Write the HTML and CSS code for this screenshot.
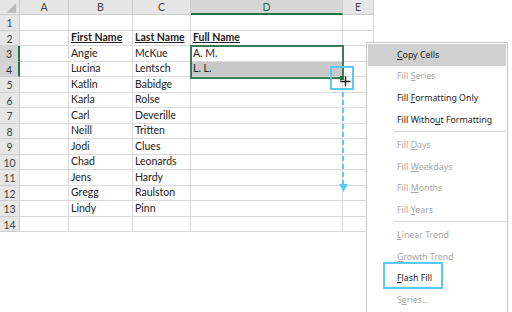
FILE: index.html
```html
<!DOCTYPE html>
<html>
<head>
<meta charset="utf-8">
<link rel="stylesheet" href="styles.css">
</head>
<body>
<div class="sheet">
  <div class="h corner"><svg width="20" height="15" viewBox="0 0 20 15"><polygon points="17,3 17,13 7,13" fill="#b8b8b8"/></svg></div>
  <div class="h col">A</div><div class="h col">B</div><div class="h col">C</div><div class="h col csel">D</div><div class="h col">E</div>

  <div class="h row">1</div><div class="c"></div><div class="c"></div><div class="c"></div><div class="c"></div><div class="c"></div>
  <div class="h row">2</div><div class="c"></div><div class="c b"><span>First Name</span></div><div class="c b"><span>Last Name</span></div><div class="c b"><span>Full Name</span></div><div class="c"></div>
  <div class="h row rsel">3</div><div class="c"></div><div class="c">Angie</div><div class="c">McKue</div><div class="c">A. M.</div><div class="c"></div>
  <div class="h row rsel">4</div><div class="c"></div><div class="c">Lucina</div><div class="c">Lentsch</div><div class="c gray">L. L.</div><div class="c"></div>
  <div class="h row">5</div><div class="c"></div><div class="c">Katlin</div><div class="c">Babidge</div><div class="c"></div><div class="c"></div>
  <div class="h row">6</div><div class="c"></div><div class="c">Karla</div><div class="c">Rolse</div><div class="c"></div><div class="c"></div>
  <div class="h row">7</div><div class="c"></div><div class="c">Carl</div><div class="c">Deverille</div><div class="c"></div><div class="c"></div>
  <div class="h row">8</div><div class="c"></div><div class="c">Neill</div><div class="c">Tritten</div><div class="c"></div><div class="c"></div>
  <div class="h row">9</div><div class="c"></div><div class="c">Jodi</div><div class="c">Clues</div><div class="c"></div><div class="c"></div>
  <div class="h row">10</div><div class="c"></div><div class="c">Chad</div><div class="c">Leonards</div><div class="c"></div><div class="c"></div>
  <div class="h row">11</div><div class="c"></div><div class="c">Jens</div><div class="c">Hardy</div><div class="c"></div><div class="c"></div>
  <div class="h row">12</div><div class="c"></div><div class="c">Gregg</div><div class="c">Raulston</div><div class="c"></div><div class="c"></div>
  <div class="h row">13</div><div class="c"></div><div class="c">Lindy</div><div class="c">Pinn</div><div class="c"></div><div class="c"></div>
  <div class="h row">14</div><div class="c"></div><div class="c"></div><div class="c"></div><div class="c"></div><div class="c"></div>
</div>

<div class="selection"></div>
<div class="handle"></div>
<div class="hbox"></div>
<svg class="cursor" width="13" height="13" viewBox="0 0 13 13">
  <path d="M6.5 1.5v10M1.5 6.5h10" stroke="#fff" stroke-width="3.2"/>
  <path d="M6.5 1.5v10M1.5 6.5h10" stroke="#111" stroke-width="1.3"/>
</svg>
<div class="dash"></div>
<svg class="arrow" width="9" height="9" viewBox="0 0 9 9"><polygon points="0,1 9,1 4.5,9" fill="#5cc8f5"/></svg>

<div class="menu">
  <div class="item on"><span><u>C</u>opy Cells</span></div>
  <div class="item dis"><span>Fill <u>S</u>eries</span></div>
  <div class="item"><span>Fill <u>F</u>ormatting Only</span></div>
  <div class="item"><span>Fill Witho<u>u</u>t Formatting</span></div>
  <div class="sep"></div>
  <div class="item dis"><span>Fill <u>D</u>ays</span></div>
  <div class="item dis"><span>Fill <u>W</u>eekdays</span></div>
  <div class="item dis"><span>Fill <u>M</u>onths</span></div>
  <div class="item dis"><span>Fill <u>Y</u>ears</span></div>
  <div class="sep"></div>
  <div class="item dis"><span><u>L</u>inear Trend</span></div>
  <div class="item dis"><span><u>G</u>rowth Trend</span></div>
  <div class="item"><span><u>F</u>lash Fill</span></div>
  <div class="item dis"><span>S<u>e</u>ries...</span></div>
</div>
<div class="fbox"></div>
</body>
</html>
```
FILE: styles.css
```css
html, body {
  margin: 0;
  padding: 0;
  background: #fff;
}
body {
  width: 512px;
  height: 312px;
  overflow: hidden;
  position: relative;
  font-family: Lato, "Open Sans", sans-serif;
}
.sheet {
  display: grid;
  grid-template-columns: 20px 49px 64px 58px 152px 31px;
  grid-template-rows: 15px repeat(7, 16px 15px);
  width: 374px;
}
.h {
  background: #e6e6e6;
  box-sizing: border-box;
  border-right: 1px solid #cdcdcd;
  border-bottom: 1px solid #cdcdcd;
  color: #444;
  font-size: 10.5px;
  display: flex;
  align-items: center;
  justify-content: center;
  line-height: 1;
}
.corner {
  padding: 0;
  align-items: stretch;
  justify-content: stretch;
}
.col {
  padding-top: 1px;
}
.csel {
  background: #d6d6d6;
  color: #217346;
  border-bottom: 2px solid #217346;
  padding-top: 2px;
}
.row {
  padding-top: 2px;
  justify-content: center;
}
.rsel {
  background: #d4d4d4;
  border-right: 2px solid #217346;
  color: #333;
}
.c {
  box-sizing: border-box;
  border-right: 1px solid #dadada;
  border-bottom: 1px solid #dadada;
  font-size: 10.5px;
  color: #222;
  padding: 0 2px 1px;
  display: flex;
  align-items: flex-end;
  white-space: nowrap;
  line-height: 13px;
}
.b span {
  font-weight: bold;
  text-decoration: underline;
  text-underline-offset: 1px;
}
.gray {
  background: #c8c8c8;
}
.selection {
  position: absolute;
  left: 190px;
  top: 45px;
  width: 154px;
  height: 34px;
  box-sizing: border-box;
  border: 2px solid #3f7a54;
}
.handle {
  position: absolute;
  left: 340px;
  top: 76px;
  width: 5px;
  height: 6px;
  background: #217346;
}
.hbox {
  position: absolute;
  left: 330px;
  top: 66px;
  width: 24px;
  height: 24px;
  box-sizing: border-box;
  border: 2px solid #5cc8f5;
}
.cursor {
  position: absolute;
  left: 339px;
  top: 75px;
}
.dash {
  position: absolute;
  left: 342px;
  top: 92px;
  width: 2px;
  height: 92px;
  background: repeating-linear-gradient(to bottom, #5cc8f5 0 5px, transparent 5px 8px);
}
.arrow {
  position: absolute;
  left: 338.5px;
  top: 183px;
}
.menu {
  position: absolute;
  left: 366px;
  top: 42px;
  width: 142px;
  box-sizing: border-box;
  border: 1px solid #c6c6c6;
  background: #fff;
  padding: 1px 1px 1px;
  display: flex;
  flex-direction: column;
  font-family: "Noto Sans", "Open Sans", sans-serif;
  font-size: 8.8px;
  color: #222;
}
.item {
  height: 21.66px;
  display: flex;
  align-items: center;
  padding-left: 29px;
  white-space: nowrap;
}
.item.on {
  background: #d0d0d0;
}
.item.dis {
  color: #a8a8a8;
}
.item u {
  text-underline-offset: 1px;
}
.sep {
  height: 3.4px;
  margin-left: 26px;
  box-sizing: border-box;
  border-top: 1px solid #d6d6d6;
  margin-top: 0;
}
.fbox {
  position: absolute;
  left: 383px;
  top: 262px;
  width: 60px;
  height: 27px;
  box-sizing: border-box;
  border: 2px solid #5cc8f5;
}
```
